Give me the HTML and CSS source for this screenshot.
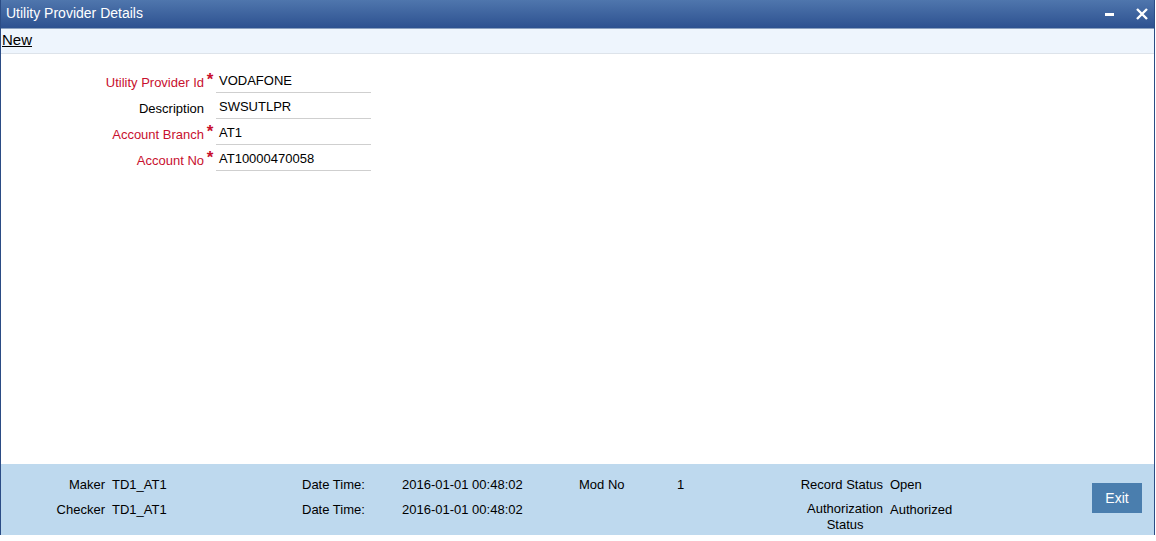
FILE: index.html
```html
<!DOCTYPE html>
<html>
<head>
<meta charset="utf-8">
<title>Utility Provider Details</title>
<link rel="stylesheet" href="styles.css">
</head>
<body>
<div class="window">
  <div class="titlebar">
    <span class="title">Utility Provider Details</span>
    <div class="controls">
      <svg class="min" width="10" height="4" viewBox="0 0 10 4"><rect x="0" y="0" width="9" height="3" fill="#fff"/></svg>
      <svg class="close" width="12" height="12" viewBox="0 0 12 12"><path d="M1 1 L11 11 M11 1 L1 11" stroke="#fff" stroke-width="2.4" fill="none"/></svg>
    </div>
  </div>
  <div class="toolbar"><a class="new" href="#">New</a></div>
  <div class="content">
    <div class="form">
      <label class="lbl req">Utility Provider Id</label><span class="star">*</span><div class="field">VODAFONE</div>
      <label class="lbl">Description</label><span class="star"></span><div class="field">SWSUTLPR</div>
      <label class="lbl req">Account Branch</label><span class="star">*</span><div class="field">AT1</div>
      <label class="lbl req">Account No</label><span class="star">*</span><div class="field">AT10000470058</div>
    </div>
  </div>
  <div class="footer">
    <div class="audit">
      <span class="fl">Maker</span><span class="fv">TD1_AT1</span>
      <span class="fp">Date Time:</span><span class="fp">2016-01-01 00:48:02</span>
      <span class="fp">Mod No</span><span class="fp">1</span>
      <span class="fr">Record Status</span><span class="fv">Open</span>

      <span class="fl">Checker</span><span class="fv">TD1_AT1</span>
      <span class="fp">Date Time:</span><span class="fp">2016-01-01 00:48:02</span>
      <span class="fp"></span><span class="fp"></span>
      <span class="fr"><span class="wrap">Authorization<br>Status</span></span><span class="fv">Authorized</span>
    </div>
    <button class="exit">Exit</button>
  </div>
</div>
</body>
</html>
```

FILE: styles.css
```css
html, body {
  margin: 0;
  padding: 0;
  background: #fff;
  font-family: Arial, "Liberation Sans", sans-serif;
}
.window {
  width: 1153px;
  height: 535px;
  border-left: 1px solid #2b4c85;
  border-right: 1px solid #2b4c85;
  display: flex;
  flex-direction: column;
  background: #fff;
}
.titlebar {
  flex: none;
  box-sizing: border-box;
  height: 29px;
  background: linear-gradient(#4f76ad, #2d5190);
  border-bottom: 1px solid #8aa0bf;
  display: flex;
  align-items: center;
  justify-content: space-between;
  padding: 0 0 2px 5px;
}
.title {
  color: #fff;
  font-size: 14px;
}
.controls {
  display: flex;
  align-items: center;
  gap: 21px;
  margin-right: 6px;
}
.controls .min { margin-top: 3px; }
.controls .close { margin-top: 1px; }
.toolbar {
  flex: none;
  box-sizing: border-box;
  height: 25px;
  background: #eef5fd;
  border-bottom: 1px solid #dde3ea;
  display: flex;
  align-items: flex-start;
  padding: 2px 0 0 1px;
}
.new {
  color: #000;
  font-size: 15px;
  line-height: 18px;
  text-decoration: underline;
}
.content {
  flex: 1;
  padding-top: 16px;
}
.form {
  display: grid;
  grid-template-columns: 203px 12px 155px;
  grid-auto-rows: 23px;
  row-gap: 3px;
  align-items: center;
  font-size: 13px;
}
.lbl {
  text-align: right;
  color: #000;
  padding-top: 2px;
}
.lbl.req { color: #c8102e; }
.star {
  color: #c8102e;
  font-size: 17px;
  font-weight: bold;
  text-align: center;
  align-self: start;
  line-height: 20px;
}
.field {
  height: 22px;
  line-height: 22px;
  border-bottom: 1px solid #cfcfcf;
  padding-left: 3px;
  color: #000;
}
.footer {
  flex: none;
  height: 71px;
  background: #bed9ee;
  display: flex;
  justify-content: space-between;
  align-items: flex-start;
  box-sizing: border-box;
  padding-top: 12px;
}
.audit {
  display: grid;
  grid-template-columns: 104px 197px 100px 177px 98px 100px 106px 120px;
  grid-auto-rows: 25px;
  font-size: 13px;
  line-height: 17px;
  color: #000;
}
.fl { text-align: right; }
.fr { text-align: right; }
.fv { padding-left: 7px; }
.wrap {
  display: inline-block;
  text-align: center;
  line-height: 16px;
}
.exit {
  margin: 7px 12px 0 0;
  width: 50px;
  height: 30px;
  border: none;
  background: #4a7eae;
  color: #fff;
  font-family: Arial, "Liberation Sans", sans-serif;
  font-size: 14px;
  padding: 0;
}
```
